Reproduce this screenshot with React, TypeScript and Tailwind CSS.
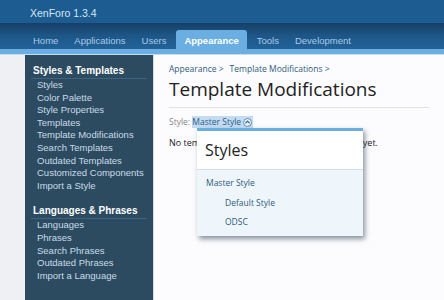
import { ChevronUp } from 'lucide-react';

const styleItems = [
  'Styles',
  'Color Palette',
  'Style Properties',
  'Templates',
  'Template Modifications',
  'Search Templates',
  'Outdated Templates',
  'Customized Components',
  'Import a Style',
];

const langItems = ['Languages', 'Phrases', 'Search Phrases', 'Outdated Phrases', 'Import a Language'];

const tabs = ['Home', 'Applications', 'Users', 'Appearance', 'Tools', 'Development'];

function NavSection({ title, items }: { title: string; items: string[] }) {
  return (
    <div className="mb-[12px]">
      <div className="mx-[6px] border-b border-[#3d6580] pl-[2px] pb-[1px] text-[10px] font-bold leading-[13px] text-white">
        {title}
      </div>
      <ul className="pl-[12px]">
        {items.map((item) => (
          <li key={item} className="text-[9.5px] leading-[12.6px] text-[#c9dbe8]">
            {item}
          </li>
        ))}
      </ul>
    </div>
  );
}

export default function App() {
  return (
    <div className="h-[300px] w-[444px] overflow-hidden bg-[#eef0f4] font-['DejaVu_Sans',sans-serif]">
      {/* header */}
      <div className="h-[23px] bg-[#1c5c90] pl-[30px] pt-[7px] font-['Liberation_Sans',sans-serif] text-[10.5px] leading-[12px] text-[#d6e6f3]">
        XenForo 1.3.4
      </div>
      <div className="flex h-[26px] items-end bg-[#215e94] bg-gradient-to-b from-[#163f66] via-[#1d5788] to-[#226299] pl-[25px] font-['Liberation_Sans',sans-serif]">
        {tabs.map((tab) =>
          tab === 'Appearance' ? (
            <div
              key={tab}
              className="mx-[2px] h-[19px] rounded-t-[3px] bg-[#6aaee2] px-[8px] pt-[5px] text-[9.5px] font-bold leading-[12px] text-white"
            >
              {tab}
            </div>
          ) : (
            <div key={tab} className="h-[19px] px-[8px] pt-[5px] text-[9.5px] leading-[12px] text-[#a9cbe6]">
              {tab}
            </div>
          )
        )}
      </div>
      <div className="h-[5px] bg-[#6aaee2]" />
      <div className="h-[1px] bg-[#c9dbe8]" />

      <div className="flex h-[245px]">
        {/* sidebar */}
        <div className="ml-[25px] w-[128px] bg-[#2c4b60] pt-[9px] font-['Liberation_Sans',sans-serif]">
          <NavSection title="Styles & Templates" items={styleItems} />
          <NavSection title="Languages & Phrases" items={langItems} />
        </div>

        {/* content */}
        <div className="relative flex-1 border-l border-[#d5dde5] bg-[#fcfcfe] px-[15px] pt-[8px] font-['Open_Sans',sans-serif]">
          <div className="flex gap-[6px] text-[8.5px] leading-[12px] text-[#2f5b7c]">
            <span>Appearance &gt;</span>
            <span>Template Modifications &gt;</span>
          </div>
          <h1 className="mt-[1px] border-b border-[#dfe3e8] pb-[5px] text-[19px] leading-[26px] text-[#222]">
            Template Modifications
          </h1>
          <div className="mt-[8px] flex items-center text-[8.5px] leading-[12px] text-[#888]">
            <span>Style:&nbsp;</span>
            <span className="flex items-center bg-[#c3dcf2] pr-[1px] text-[#2a5b86]">
              Master Style
              <span className="ml-[2px] flex h-[9px] w-[9px] items-center justify-center rounded-full border border-[#6a8eb0] bg-[#e7f0f8]">
                <ChevronUp className="h-[8px] w-[8px] text-[#2a5b86]" strokeWidth={4} />
              </span>
            </span>
          </div>
          <p className="mt-[9px] text-[9px] leading-[12px] text-[#222]">
            No template modifications have been defined yet.
          </p>

          {/* styles menu */}
          <div className="absolute left-[43px] top-[73px] w-[166px] border-t-[3px] border-[#6aaee2] bg-[#eef6fc] shadow-[2px_3px_5px_rgba(40,60,80,0.55)]">
            <div className="border-b border-[#cfe0ee] bg-white px-[8px] pb-[7px] pt-[7px] text-[16px] leading-[24px] text-[#222]">
              Styles
            </div>
            <ul className="pb-[4px] pt-[3px] text-[8.5px] leading-[19.5px] text-[#2f5b7c]">
              <li className="pl-[9px]">Master Style</li>
              <li className="pl-[28px]">Default Style</li>
              <li className="pl-[28px]">ODSC</li>
            </ul>
          </div>
        </div>
      </div>
    </div>
  );
}
